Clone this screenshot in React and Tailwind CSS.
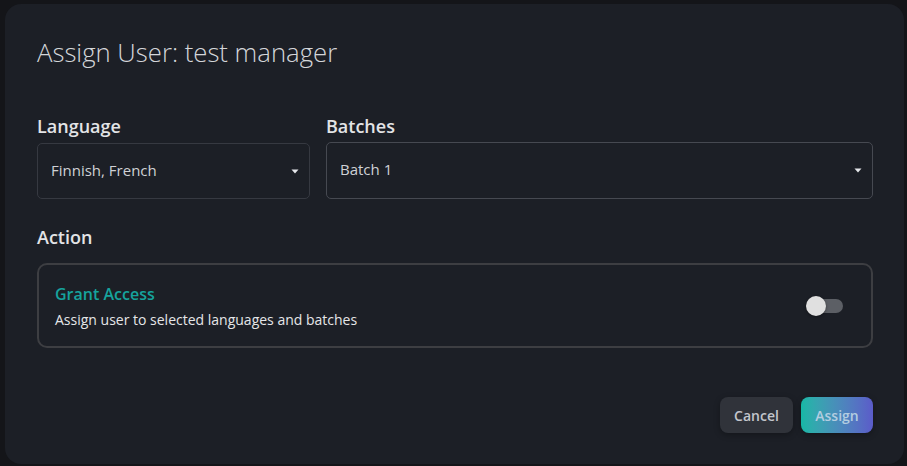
import React from "react";

function Caret() {
  return (
    <svg width="8" height="5" viewBox="0 0 8 5" className="shrink-0">
      <path d="M0.5 0.5 L7.5 0.5 L4 4.5 Z" fill="#e5e7eb" />
    </svg>
  );
}

export default function App() {
  return (
    <div
      className="w-[907px] h-[466px] bg-[#141519] pt-[4px] pl-[5px] overflow-hidden"
      style={{ fontFamily: '"Open Sans", "Noto Sans", sans-serif' }}
    >
      <div className="relative w-[899px] h-[460px] rounded-[16px] bg-[#1c1f26] pt-[33px] pl-[32px] pr-[31px]">
        <h2 className="text-[25.7px] leading-[32px] font-light text-[#d4d6da]">
          Assign User: test manager
        </h2>

        <div className="mt-[45px] flex gap-[16px]">
          <div className="w-[273px] flex flex-col">
            <label className="text-[18px] leading-[24px] font-semibold text-[#e3e4e6]">Language</label>
            <div className="mt-[5px] h-[56px] rounded-[5px] border border-[#363941] flex items-center justify-between pl-[13px] pr-[10px]">
              <span className="text-[15px] text-[#cfd1d5] -mt-[2px]">Finnish, French</span>
              <Caret />
            </div>
          </div>
          <div className="flex-1 flex flex-col">
            <label className="text-[18px] leading-[24px] font-semibold text-[#e3e4e6]">Batches</label>
            <div className="mt-[4px] h-[57px] rounded-[5px] border-[1.5px] border-[#464951] flex items-center justify-between pl-[13px] pr-[10px]">
              <span className="text-[15px] text-[#cfd1d5] -mt-[2px]">Batch 1</span>
              <Caret />
            </div>
          </div>
        </div>

        <div className="mt-[26px] text-[18px] leading-[24px] font-semibold text-[#e3e4e6]">Action</div>

        <div className="mt-[14px] h-[85px] rounded-[10px] border-2 border-[#3d3e42] flex items-center justify-between pl-[16px] pr-[28px]">
          <div className="flex flex-col mt-[2px]">
            <span className="text-[16px] leading-[22px] font-semibold text-[#16a39d]">Grant Access</span>
            <span className="mt-[5px] text-[14px] leading-[20px] text-[#e5e6e8]">
              Assign user to selected languages and batches
            </span>
          </div>
          <div className="relative w-[37px] h-[20px] flex items-center">
            <div className="ml-[4px] w-[33px] h-[14px] rounded-full bg-[#5c5f65]" />
            <div className="absolute left-0 top-0 w-[20px] h-[20px] rounded-full bg-[#e0e0e0] shadow-[0_1px_3px_rgba(0,0,0,0.4)]" />
          </div>
        </div>

        <div className="mt-[49px] flex justify-end gap-[8px]">
          <button className="w-[73px] h-[36px] rounded-[8px] bg-[#30333a] text-[14px] font-semibold text-[#c3c6cc] shadow-[0_2px_6px_rgba(0,0,0,0.3)]">
            Cancel
          </button>
          <button className="w-[72px] h-[36px] rounded-[8px] bg-gradient-to-r from-[#14b8a6] to-[#5b5bc9] text-[14px] font-semibold text-[#b3cde0] shadow-[0_2px_6px_rgba(0,0,0,0.3)]">
            Assign
          </button>
        </div>
      </div>
    </div>
  );
}
